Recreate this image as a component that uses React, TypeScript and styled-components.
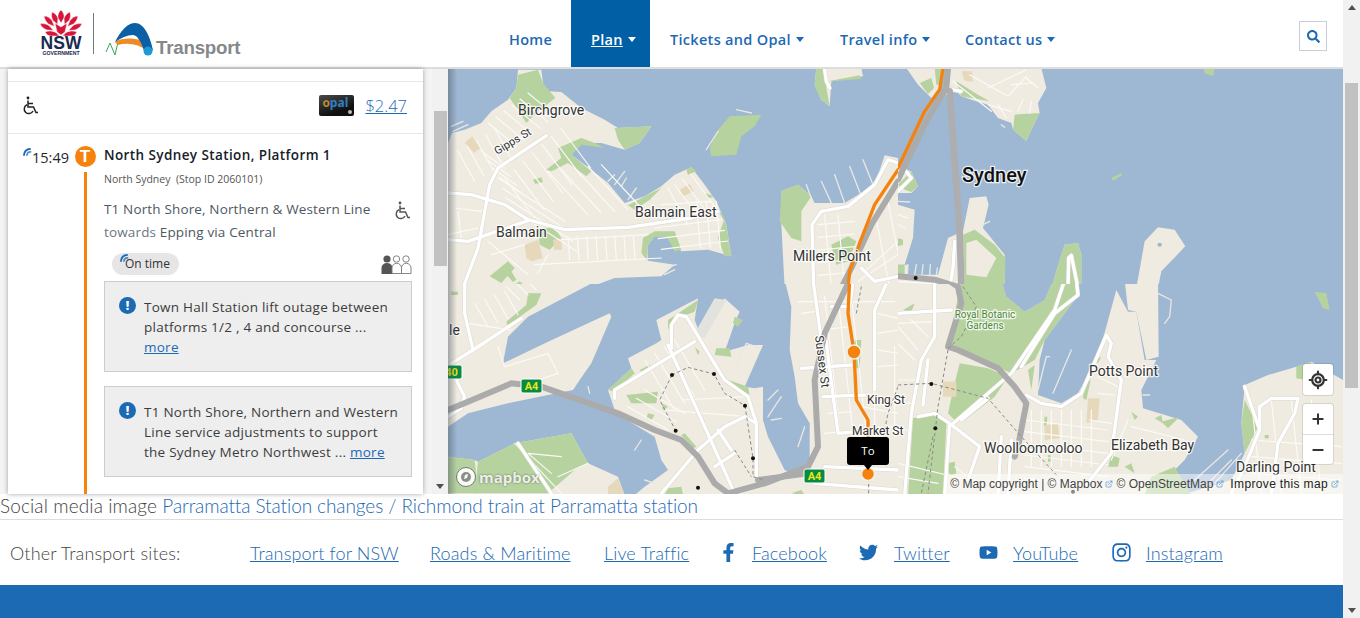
import React from 'react';
import styled, { createGlobalStyle } from 'styled-components';
import { FaFacebookF, FaInstagram, FaSearch, FaTwitter, FaYoutube } from 'react-icons/fa';
import { ExternalLink, LocateFixed, Minus, Plus } from 'lucide-react';

const BLUE = '#1c69b4';
const ORANGE = '#f5820d';
const UI_FONT = '"Open Sans", "Noto Sans", sans-serif';
const FOOT_FONT = 'Lato, "Open Sans", sans-serif';
const MAP_FONT = 'Roboto, "Liberation Sans", sans-serif';

const GlobalStyle = createGlobalStyle`
  html, body { margin: 0; padding: 0; overflow: hidden; background: #fff; }
  * { box-sizing: border-box; }
  a { color: ${BLUE}; }
`;

const Page = styled.div`
  width: 1360px;
  height: 618px;
  display: flex;
  overflow: hidden;
  font-family: ${UI_FONT};
`;

const Main = styled.div`
  width: 1343px;
  display: flex;
  flex-direction: column;
`;

const Track = styled.div<{ $w: number }>`
  width: ${(p) => p.$w}px;
  flex: none;
  background: #f1f1f1;
  display: flex;
  flex-direction: column;
  align-items: center;
  padding: 5px 0;
`;

const Thumb = styled.div<{ $top: number; $h: number }>`
  width: 13px;
  height: ${(p) => p.$h}px;
  margin-top: ${(p) => p.$top}px;
  background: #c1c1c1;
`;

const Arrow = styled.div<{ $up?: boolean }>`
  width: 0;
  height: 0;
  border-left: 4px solid transparent;
  border-right: 4px solid transparent;
  ${(p) => (p.$up ? 'border-bottom: 5px solid #505050;' : 'border-top: 5px solid #505050; margin-top: auto;')}
`;

/* header */
const Header = styled.header`
  height: 69px;
  flex: none;
  display: flex;
  border-bottom: 2px solid #ddd;
  background: #fff;
`;

const Brand = styled.div`
  width: 489px;
  flex: none;
  display: flex;
  padding: 10px 0 0 40px;
`;

const Nav = styled.nav`
  display: flex;
  flex: 1;
`;

const NavItem = styled.a<{ $active?: boolean; $w: number }>`
  width: ${(p) => p.$w}px;
  flex: none;
  display: flex;
  align-items: center;
  gap: 5px;
  padding: 11px 0 0 20px;
  font-size: 14.5px;
  font-weight: 600;
  letter-spacing: 0.3px;
  color: ${(p) => (p.$active ? '#fff' : BLUE)};
  background: ${(p) => (p.$active ? '#005fa5' : 'transparent')};
  span {
    text-decoration: ${(p) => (p.$active ? 'underline' : 'none')};
  }
  i {
    width: 0;
    height: 0;
    margin-top: 1px;
    border-left: 4.5px solid transparent;
    border-right: 4.5px solid transparent;
    border-top: 5px solid ${(p) => (p.$active ? '#fff' : BLUE)};
  }
`;

const SearchButton = styled.button`
  width: 28px;
  height: 30px;
  margin: 21px 16px 0 auto;
  padding: 0;
  display: flex;
  align-items: center;
  justify-content: center;
  background: #fff;
  border: 1px solid #c9ced6;
  color: ${BLUE};
  font-size: 13px;
`;

/* journey panel */
const MapRow = styled.div`
  height: 425px;
  flex: none;
  display: flex;
`;

const LeftPane = styled.div`
  width: 448px;
  flex: none;
  display: flex;
  justify-content: space-between;
  padding-left: 8px;
  background: #f4f4f4;
`;

const Panel = styled.div`
  width: 415px;
  background: #fff;
  box-shadow: 0 0 5px rgba(0, 0, 0, 0.35);
  overflow: hidden;
  position: relative;
`;

const TopGap = styled.div`
  height: 13px;
  border-bottom: 1px solid #e8e8e8;
`;

const FareRow = styled.div`
  height: 52px;
  display: flex;
  align-items: center;
  gap: 11px;
  padding: 0 16px 4px 14px;
  border-bottom: 1px solid #e8e8e8;
`;

const OpalCard = styled.div`
  width: 35px;
  height: 21px;
  margin-left: auto;
  padding-left: 3px;
  border-radius: 2px;
  background: linear-gradient(160deg, #4a4a4a, #111 70%);
  color: #2f80c5;
  font-size: 12px;
  font-weight: 700;
  line-height: 15px;
  position: relative;
  span {
    color: #b98a34;
  }
  &::after {
    content: '';
    position: absolute;
    right: 2px;
    bottom: 2px;
    width: 4px;
    height: 4px;
    border-radius: 50%;
    background: #bbb;
  }
`;

const Fare = styled.a`
  font-size: 16.5px;
  font-weight: 300;
  text-decoration: underline;
  color: ${BLUE};
`;

const Leg = styled.div`
  display: flex;
  height: 361px;
`;

const TimeCol = styled.div`
  width: 67px;
  flex: none;
  padding: 14px 6px 0 0;
  text-align: right;
  font-size: 14.5px;
  color: #22272b;
  position: relative;
`;

const BlipMark = styled.svg<{ $left: number; $top: number }>`
  position: absolute;
  left: ${(p) => p.$left}px;
  top: ${(p) => p.$top}px;
`;

const RailCol = styled.div`
  width: 20px;
  flex: none;
  display: flex;
  flex-direction: column;
  align-items: center;
  padding-top: 12px;
`;

const ModeBadge = styled.div`
  width: 21px;
  height: 21px;
  flex: none;
  border-radius: 50%;
  background: ${ORANGE};
  color: #fff;
  font-family: 'Liberation Sans', sans-serif;
  font-size: 17px;
  font-weight: 700;
  line-height: 21px;
  text-align: center;
`;

const Rail = styled.div`
  width: 3px;
  flex: 1;
  margin-top: 5px;
  background: ${ORANGE};
`;

const Details = styled.div`
  width: 308px;
  margin-left: 9px;
  padding-top: 12px;
`;

const StopTitle = styled.div`
  font-size: 13.5px;
  font-weight: 600;
  line-height: 19px;
  letter-spacing: 0.4px;
  color: #17202a;
`;

const StopMeta = styled.div`
  margin-top: 6px;
  font-size: 10.5px;
  line-height: 16px;
  color: #555;
`;

const LineRow = styled.div`
  display: flex;
  justify-content: space-between;
  margin-top: 11px;
`;

const LineText = styled.div`
  font-size: 13.5px;
  line-height: 23px;
  letter-spacing: 0.15px;
  color: #4d5862;
  span {
    color: #6b7680;
  }
`;

const IconNudge = styled.div`
  padding-top: 3px;
`;

const StatusRow = styled.div`
  display: flex;
  justify-content: space-between;
  align-items: center;
  height: 26px;
  margin-top: 7px;
  padding-left: 8px;
`;

const StatusPill = styled.div`
  position: relative;
  width: 67px;
  height: 22px;
  border-radius: 11px;
  background: #e6e6e6;
  padding-left: 13px;
  font-size: 12px;
  line-height: 22px;
  color: #333;
`;

const Alert = styled.div<{ $first?: boolean }>`
  display: flex;
  gap: 8px;
  height: 91px;
  margin-top: ${(p) => (p.$first ? 4 : 14)}px;
  padding: 15px 12px 0 14px;
  background: #eee;
  border: 1px solid #ccc;
`;

const AlertIcon = styled.div`
  width: 17px;
  height: 17px;
  flex: none;
  border-radius: 50%;
  background: ${BLUE};
  color: #fff;
  font-size: 12px;
  font-weight: 800;
  line-height: 17px;
  text-align: center;
`;

const AlertText = styled.div`
  font-size: 13.5px;
  line-height: 20px;
  letter-spacing: 0.25px;
  white-space: nowrap;
  color: #3c3c3c;
  a {
    text-decoration: underline;
  }
`;

/* map */
const MapPane = styled.div`
  position: relative;
  flex: 1;
  overflow: hidden;
  background: #9eb7d2;
  &::before {
    content: '';
    position: absolute;
    inset: 0 auto 0 0;
    width: 9px;
    background: linear-gradient(90deg, rgba(70, 80, 90, 0.45), rgba(70, 80, 90, 0));
    z-index: 1;
  }
`;

const MapSvg = styled.svg`
  display: block;
  width: 895px;
  height: 425px;
`;

const Label = styled.text<{ $size?: number; $color?: string; $weight?: number }>`
  font-family: ${MAP_FONT};
  font-size: ${(p) => p.$size ?? 14}px;
  font-weight: ${(p) => p.$weight ?? 400};
  fill: ${(p) => p.$color ?? '#333'};
  stroke: rgba(255, 255, 255, 0.8);
  stroke-width: 2.5px;
  paint-order: stroke;
`;

const Controls = styled.div`
  position: absolute;
  right: 10px;
  bottom: 30px;
  display: flex;
  flex-direction: column;
  gap: 9px;
  color: #333;
`;

const ControlGroup = styled.div`
  width: 30px;
  background: #fff;
  border-radius: 3px;
  box-shadow: 0 0 0 1px rgba(0, 0, 0, 0.1);
`;

const ControlButton = styled.div<{ $h: number; $divided?: boolean }>`
  height: ${(p) => p.$h}px;
  display: flex;
  align-items: center;
  justify-content: center;
  border-top: ${(p) => (p.$divided ? '1px solid #ddd' : 'none')};
`;

const Pin = styled.div`
  position: absolute;
  left: 399px;
  top: 368px;
  width: 42px;
  height: 28px;
  background: #000;
  border-radius: 3px;
  color: #fff;
  font-size: 11.5px;
  line-height: 28px;
  text-align: center;
  &::after {
    content: '';
    position: absolute;
    left: 17px;
    bottom: -5px;
    border-left: 4px solid transparent;
    border-right: 4px solid transparent;
    border-top: 5px solid #000;
  }
`;

const Attribution = styled.div`
  position: absolute;
  right: 0;
  bottom: 0;
  width: 398px;
  height: 20px;
  padding-right: 4px;
  display: flex;
  align-items: center;
  justify-content: flex-end;
  gap: 3px;
  background: rgba(255, 255, 255, 0.5);
  font-family: 'Liberation Sans', sans-serif;
  font-size: 12px;
  color: #444;
  white-space: nowrap;
  svg {
    color: #4a90d0;
  }
  b {
    font-weight: 400;
    letter-spacing: 0.35px;
    color: #222;
    margin-left: 3px;
  }
`;

const MapboxMark = styled.div`
  position: absolute;
  left: 7px;
  bottom: 6px;
  display: flex;
  align-items: center;
  gap: 2px;
  font-family: ${UI_FONT};
  font-size: 15px;
  font-weight: 700;
  color: rgba(255, 255, 255, 0.9);
  text-shadow: 0 0 2px rgba(0, 0, 0, 0.55);
`;

/* footer */
const SocialLine = styled.div`
  height: 26px;
  flex: none;
  border-bottom: 1px solid #ddd;
  font-family: ${FOOT_FONT};
  font-size: 19px;
  font-weight: 300;
  letter-spacing: 0.12px;
  line-height: 24px;
  color: #444;
  white-space: nowrap;
  span {
    letter-spacing: -0.08px;
    color: ${BLUE};
  }
`;

const SitesRow = styled.div`
  height: 65px;
  flex: none;
  display: flex;
  align-items: center;
  padding-left: 10px;
  font-family: ${FOOT_FONT};
  font-size: 18px;
  font-weight: 300;
  letter-spacing: 0.15px;
  white-space: nowrap;
  color: #444;
`;

const SitesLabel = styled.span`
  width: 240px;
  flex: none;
`;

const SiteLink = styled.a<{ $w: number }>`
  display: flex;
  align-items: center;
  width: ${(p) => p.$w}px;
  flex: none;
  text-decoration: underline;
  color: ${BLUE};
`;

const SocialIcon = styled.span<{ $w: number; $size?: number }>`
  width: ${(p) => p.$w}px;
  flex: none;
  display: flex;
  color: ${BLUE};
  font-size: ${(p) => p.$size ?? 19}px;
`;

const Band = styled.div`
  flex: 1;
  background: #1c69b4;
`;

/* map data, in coordinates of 3x crops of each quarter of the map */
const hatch = (x: number, y: number, dx: number, dy: number, sx: number, sy: number, n: number) =>
  Array.from({ length: n }, (_, i) => `M${x + i * sx},${y + i * sy}l${dx},${dy}`).join('');

type Quarter = {
  id: string;
  x: number;
  y: number;
  w: number;
  h: number;
  clipY: number;
  land: string[];
  water?: string[];
  park: string[];
  sand?: string[];
  pale?: string[];
  wharves?: string[];
  streets: string[];
  roads: string[];
  motorways?: string[];
  bridge?: string[];
  rails?: string[];
  route?: string[];
  dots?: [number, number][];
};

const quarters: Quarter[] = [
  {
    id: 'nw',
    x: 448,
    y: 68,
    w: 1350,
    h: 648,
    clipY: 0,
    land: [
      'M0,225L12,195 50,185 100,165 130,130 180,95 205,60 210,5 280,5 285,45 300,70 340,72 400,120 470,155 510,180 610,175 575,225 530,245 460,225 400,225 370,260 430,305 480,345 530,405 590,385 640,355 680,320 730,298 770,350 805,400 835,470 850,565 780,545 700,550 655,505 620,505 598,535 600,578 680,590 640,625 500,630 420,660 0,660Z',
      'M1105,0L1240,0 1245,25 1150,40 1145,115 1120,95 1100,50Z',
      'M1010,660L1000,470 1000,370 1050,350 1090,385 1100,405 1190,405 1280,350 1310,262 1350,270 1350,660Z',
    ],
    park: [
      'M185,90L205,60 210,20 270,5 285,45 322,90 270,130 235,165 210,125Z',
      'M500,180L610,175 575,225 530,245 510,215Z',
      'M295,305L340,270 330,240 400,210 440,225 470,240 400,230 370,260 430,310 415,325 360,285 310,310Z',
      'M255,335L280,328 285,342 262,348Z',
      'M540,412L620,370 640,360 605,395 560,425Z',
      'M715,305L730,297 745,310 720,320Z',
      'M770,375L800,385 780,392Z',
      'M800,410L835,470 850,565 830,565 810,510 830,450Z',
      'M580,555L585,510 620,490 680,490 700,545 680,550 655,505 620,505 598,535 598,578Z',
      'M125,625L180,580 200,600 160,645Z',
      'M175,620L190,610 205,635 195,642Z',
      'M200,650L215,640 240,660 205,660Z',
      'M270,480L320,480 340,510 305,545 275,530Z',
      'M845,145L940,140 920,175 880,205 865,260 790,265 785,240 810,185Z',
      'M1105,0L1130,0 1135,60 1145,115 1115,90 1100,50Z',
      'M1140,40L1235,22 1240,33 1150,40Z',
      'M1000,370L1050,350 1090,385 1060,430 1060,520 1030,510 995,460Z',
      'M1150,530L1200,505 1225,520 1200,580 1165,590Z',
    ],
    sand: [
      'M50,225L72,205 97,240 78,255Z',
      'M695,365L725,348 738,370 705,385Z',
      'M230,530L270,515 285,570 250,580 235,570Z',
      'M315,515L340,510 342,545 318,545Z',
    ],
    wharves: [
      'M10,175L45,160M15,190L60,170M775,245L810,190M865,125L910,135M480,340L500,320M500,350L530,310M520,355L535,330M540,395L565,360M650,600L685,590M650,620L680,605',
      'M1075,350L1095,405M1120,340L1150,405M1160,320L1190,405M1205,295L1240,385M1245,275L1275,350',
    ],
    streets: [
      hatch(120, 165, 85, 70, 24, -18, 6),
      hatch(30, 250, 50, 90, 28, -16, 5),
      hatch(100, 250, 70, 50, 18, 26, 4),
      hatch(170, 330, 90, 120, 28, -25, 7),
      hatch(150, 330, 200, 130, 12, 30, 4),
      hatch(300, 310, 120, 130, 40, -5, 5),
      hatch(360, 505, 5, 70, 28, 0, 8),
      'M340,515L600,500M260,590L640,570M270,615L300,560M120,520L240,620M130,560L230,530M20,420L100,430M0,500L90,480M30,430L40,510',
      hatch(680, 350, 70, 95, 24, -16, 3),
      hatch(620, 480, 200, -25, 10, 32, 3),
      hatch(745, 400, 12, 140, 30, 0, 3),
      'M640,410L790,400M660,360L720,470',
      hatch(1110, 470, 110, -10, 0, 38, 5),
      hatch(1130, 440, 20, 220, 40, 0, 2),
      hatch(1280, 430, 45, 230, 40, -30, 2),
      'M1230,640L1350,560M1250,610L1350,520',
    ],
    roads: [
      'M295,203L150,300 125,350 90,540 45,660',
      'M0,375L70,380 170,410 240,455 350,485 540,478 730,450 810,430',
      'M0,515L60,520 240,458',
      'M1097,660L1092,470 1120,430 1200,415 1280,350 1320,275 1350,285',
      'M1130,5L1135,40 1145,60',
      'M1240,600L1280,640 1350,625',
    ],
    motorways: ['M1350,340L1270,470 1210,600 1180,660'],
    route: ['M1350,305L1280,410 1235,525 1205,610 1200,660'],
  },
  {
    id: 'ne',
    x: 898,
    y: 68,
    w: 1350,
    h: 648,
    clipY: 0,
    land: [
      'M25,0L60,50 100,90 130,50 130,0Z',
      'M150,0L430,0 445,60 420,105 425,135 400,185 385,218 345,185 340,165 300,150 270,110 220,95 190,85 175,70 150,60Z',
      'M0,300L40,310 60,355 40,375 0,375Z',
      'M0,410L50,425 45,510 20,590 0,590Z',
      'M0,625L0,590 30,590 30,620 120,620 150,510 195,490 215,390 265,385 272,410 255,480 320,560 320,660 0,660Z',
      'M460,660L490,560 500,530 540,525 550,560 550,660Z',
      'M715,660L740,520 780,478 830,485 862,535 790,610 780,660Z',
    ],
    water: ['M778,530a7,6 0 1,0 14,0a7,6 0 1,0 -14,0Z'],
    park: [
      'M65,45L100,30 108,60 90,78Z',
      'M110,0L135,0 130,50 115,50Z',
      'M175,40L240,80 275,100 250,95 190,85Z',
      'M350,140L425,135 400,185 385,218 345,185Z',
      'M915,0L950,0 945,25 920,15Z',
      'M640,330L670,315 672,322 645,338Z',
      'M0,350L40,310 60,355 40,372 20,365Z',
      'M0,510L15,515 15,530 0,535Z',
      'M195,500L230,485 290,530 322,570 320,660 200,660Z',
      'M460,660L490,560 500,530 540,525 550,560 550,660Z',
      'M0,590L20,590 20,620 0,620Z',
    ],
    pale: ['M205,525L235,515 295,570 265,628 205,620Z'],
    sand: ['M190,10L222,10 225,42 200,38Z'],
    wharves: [
      'M30,590L28,620M55,590L50,620M75,590L72,620M97,590L95,620M118,600L115,620',
      'M255,470L275,460M310,170L320,178M0,400L35,402',
    ],
    streets: [
      'M215,20L330,85M165,40L280,130M270,60L385,5M330,85L385,25M360,130L375,95M300,110L325,150M270,110L340,130M340,50L405,45M385,30L420,60M400,100L395,135M0,640L150,650',
      'M0,440L30,450M0,470L20,480',
    ],
    roads: ['M170,520L165,600 155,660', 'M510,660L512,570 520,562 540,660', 'M20,305L40,330 0,370', 'M145,75L160,65 190,70'],
    motorways: ['M150,0L145,60 90,150 0,335', 'M0,625L110,635 190,660'],
    bridge: ['M155,70L185,490 190,650'],
    route: ['M135,0L125,65 80,130 0,300'],
    dots: [[53, 630]],
  },
  {
    id: 'sw',
    x: 448,
    y: 280,
    w: 1350,
    h: 645,
    clipY: 12,
    land: [
      'M0,0L450,0 240,110 180,170 165,250 300,185 485,100 490,110 430,250 395,300 375,330 300,345 180,370 60,400 0,440Z',
      'M0,530L80,540 90,545 200,490 370,460 420,550 510,590 530,645 0,645Z',
      'M480,330L550,265 540,235 625,190 640,180 625,120 750,55 740,120 755,160 830,55 875,95 860,130 830,215 900,195 945,195 890,320 920,325 945,320 945,420 960,470 1010,570 1050,590 1085,560 1085,430 1050,370 1040,290 1025,210 1030,80 1010,0 1350,0 1350,645 560,645 590,620 660,570 640,540 620,470 520,410 500,390Z',
    ],
    park: [
      'M660,120L750,60 740,95 700,110 680,105 660,150Z',
      'M480,330L550,265 560,280 500,335Z',
      'M575,270L605,255 612,265 580,275Z',
      'M535,345L630,335 625,370 550,370Z',
      'M600,400L620,405 610,420 595,415Z',
      'M640,370L660,380 645,390Z',
      'M740,200L755,215 750,225Z',
      'M805,205L845,205 850,230 800,225Z',
      'M860,110L885,120 870,140 855,130Z',
      'M840,300L900,320 905,345 860,320Z',
      'M710,460L745,500 735,505 700,465Z',
      'M240,40L280,40 265,75 215,110 180,140 175,125 235,75Z',
      'M10,35L30,35 30,45 10,45Z',
      'M80,540L90,640 0,640 0,530Z',
      'M90,545L200,490 370,460 420,550 380,570 300,640 80,640Z',
      'M1220,180L1240,180 1235,265 1215,265Z',
      'M660,625L700,620 705,645 650,645Z',
      'M1030,640L1060,630 1070,645Z',
    ],
    sand: ['M480,620L510,595 530,645 480,645Z'],
    pale: ['M740,160L800,55 835,60 770,175Z'],
    wharves: [
      'M420,320L425,340M560,510L580,480M590,600L620,610M860,270L895,190 940,205M960,360L990,330M960,410L1000,350M970,420L1000,415M1050,500L1070,440',
    ],
    streets: [
      hatch(80, 70, 40, 70, 30, -12, 4),
      hatch(175, 20, 40, 40, 25, -15, 3),
      'M150,200L170,260 300,220 330,280 210,320M60,130L190,150',
      hatch(590, 240, 90, 150, 30, -20, 4),
      hatch(540, 380, 120, 70, 25, -25, 3),
      'M650,390L900,410M700,360L900,350',
      hatch(1050, 65, 290, 0, 0, 28, 1),
      'M1060,100L1100,95M1120,150L1205,140M1060,265L1200,255M1135,350L1230,345M1140,400L1210,395',
      hatch(1130, 50, 45, 410, 40, 0, 3),
      hatch(1280, 200, 0, 270, 60, 0, 2),
      'M1290,100L1350,115M1290,160L1350,150M1290,210L1350,220M1290,260L1350,255M1240,380L1350,400M1130,460L1350,440',
      'M310,580L240,520 340,530M200,490L340,640M420,550L330,590',
    ],
    roads: [
      'M50,0L50,100 75,210 10,250',
      'M75,210L220,115',
      'M20,290L50,350 40,385 0,410',
      'M500,355L500,330 740,185',
      'M670,205L670,135 690,105 715,110 790,235 830,300 900,350 925,430 925,600',
      'M660,195L860,640',
      'M640,640L750,510 830,440 890,410 925,430',
      'M810,450L850,510',
      'M800,560L860,520',
      'M1215,5L1205,80 1150,80',
      'M1060,265L1210,255',
      'M1280,330L1280,90 1320,0',
      'M1095,0L1120,180',
      'M1125,350L1250,345',
      'M1130,150L1170,460 1220,455',
      'M1130,560L1350,570',
      'M1100,610L1350,630',
      'M210,490L310,640',
    ],
    motorways: [
      'M0,390L60,365 190,310 280,320 510,400 620,450 700,480 750,530 800,610 840,640 950,610 1080,560 1110,500 1100,300 1130,160 1205,0',
      'M930,600L1080,580',
    ],
    rails: [
      'M672,285L720,262 798,282 830,340 891,377',
      'M672,285L635,360 683,452',
      'M891,377L915,535 915,590 950,600',
      'M860,510L910,590',
      'M1350,320L1320,400 1310,450',
      'M1225,100L1240,20M1262,640L1262,600',
    ],
    route: ['M1205,0L1200,100 1218,217 1225,360 1260,420 1262,580'],
    dots: [
      [672, 285],
      [798, 282],
      [891, 377],
      [683, 452],
      [915, 535],
      [750, 623],
    ],
  },
  {
    id: 'se',
    x: 898,
    y: 280,
    w: 1335,
    h: 645,
    clipY: 12,
    land: [
      'M0,0L540,0 545,40 500,100 440,180 425,240 420,345 490,370 540,340 600,230 655,30 690,95 715,95 740,240 775,240 730,330 735,385 850,420 900,470 860,540 830,570 880,645 0,645Z',
      'M680,0L780,0 782,230 745,240 715,95 690,90Z',
      'M1040,315L1110,285 1195,260 1240,245 1335,300 1335,645 850,645 1000,600 1040,520 1030,430Z',
    ],
    water: ['M310,0L465,0 440,60 380,95 325,50Z'],
    park: [
      'M190,0L310,0 325,50 380,95 440,60 465,0 540,0 545,40 500,100 440,180 410,240 340,280 270,250 190,210 150,200 170,100Z',
      'M185,250L270,265 330,290 290,350 200,420 170,420 150,400 170,310Z',
      'M45,415L110,395 145,430 135,645 30,645Z',
      'M1195,260L1240,245 1225,300 1195,295Z',
      'M1040,360L1080,440 1040,520 1030,430Z',
      'M1250,35L1285,40 1295,90 1275,85Z',
      'M15,90L50,70 40,95Z',
      'M700,395L720,410 710,420Z',
      'M770,415L790,405 795,430Z',
      'M790,425L845,410 810,445Z',
      'M640,525L665,535 660,560 630,560Z',
      'M680,560L700,550 710,580Z',
      'M560,310L578,300 565,360 555,355Z',
      'M760,590L830,560 880,645 740,645Z',
      'M150,550L170,545 175,580 155,590Z',
      'M390,270L410,255 400,330Z',
      'M590,240L610,230 600,250Z',
      'M440,410L448,410 445,440 438,438Z',
      'M450,525L462,525 460,545 450,545Z',
      'M1100,465L1112,465 1112,475 1100,475Z',
    ],
    sand: [
      'M135,305L175,305 175,350 135,350Z',
      'M570,355L605,355 600,420 565,430Z',
      'M440,435L480,432 485,475 440,480Z',
    ],
    wharves: [
      'M420,330L445,230 455,230M465,340L520,210M780,40L820,60 815,110 800,130M890,600L990,510M920,620L1000,540M950,610L1030,520M735,345L755,345',
    ],
    streets: [
      hatch(0, 100, 100, -5, 0, 30, 2),
      'M0,140L60,210M0,190L50,240M40,120L90,170M0,300L60,300M0,370L50,370M0,450L40,450',
      hatch(400, 390, 0, 170, 30, 0, 7),
      hatch(380, 420, 250, 30, 0, 35, 6),
      'M600,290L660,320M600,340L650,345M575,420L640,430M700,440L860,480M660,510L860,510M690,420L640,540',
      hatch(1060, 360, 30, 280, 60, 0, 4),
      hatch(1060, 480, 270, 20, 0, 50, 3),
      'M0,550L210,600M0,590L120,610',
      'M170,560L270,640',
    ],
    roads: [
      'M500,0L470,90 340,280 160,435',
      'M535,0L540,45 470,100 370,260',
      'M110,0L110,170 70,240 40,400 20,645',
      'M60,410L110,400 155,430 245,500 210,600',
      'M155,430L140,645',
      'M90,240L75,375',
      'M385,345L430,370 490,380 550,340 625,165 640,190 630,230 670,300 640,520 560,620',
      'M1040,320L1085,450 1040,560 1000,640',
      'M1085,445L1085,380 1120,355 1200,355 1190,400 1140,490 1120,645',
      'M0,100L160,90',
      'M310,470L300,640M340,480L330,640',
      'M270,355L190,420',
    ],
    motorways: ['M0,0L150,0 180,20 190,70 150,200 180,210 300,265 350,320 385,370 360,500 350,530'],
    rails: ['M0,315L100,310 270,355 370,470 480,590', 'M150,210L120,380 90,640', 'M195,20L235,80 190,170 150,205', 'M105,470L70,640'],
    dots: [
      [100, 312],
      [112, 445],
      [525, 635],
    ],
  },
];

const MapLayer = ({ q }: { q: Quarter }) => (
  <g transform={`translate(${q.x} ${q.y}) scale(${1 / 3})`} clipPath={`url(#clip-${q.id})`} fill="none" strokeLinecap="round" strokeLinejoin="round">
    <clipPath id={`clip-${q.id}`}>
      <rect x={0} y={q.clipY} width={q.w} height={q.h - q.clipY} />
    </clipPath>
    {q.land.map((d) => <path key={d} d={d} fill="#efebe0" />)}
    {q.park.map((d) => <path key={d} d={d} fill="#b6d29f" />)}
    {q.pale?.map((d) => <path key={d} d={d} fill={q.id === 'sw' ? '#e2e2de' : '#efebe0'} />)}
    {q.water?.map((d) => <path key={d} d={d} fill="#9eb7d2" />)}
    {q.sand?.map((d) => <path key={d} d={d} fill="#e6d9bb" />)}
    {q.wharves?.map((d) => <path key={d} d={d} stroke="#e8e8e2" strokeWidth={4} />)}
    {q.streets.map((d) => <path key={d} d={d} stroke="#fbfaf6" strokeWidth={3.5} />)}
    {q.roads.map((d) => <path key={d} d={d} stroke="#d9d8d2" strokeWidth={13} />)}
    {q.roads.map((d) => <path key={d} d={d} stroke="#fff" strokeWidth={10} />)}
    {q.bridge?.map((d) => <path key={d} d={d} stroke="#aeaeb0" strokeWidth={20} />)}
    {q.motorways?.map((d) => <path key={d} d={d} stroke="#ababab" strokeWidth={18} />)}
    {q.rails?.map((d) => <path key={d} d={d} stroke="#8a8a8a" strokeWidth={3} strokeDasharray="10 8" strokeLinecap="butt" />)}
    {q.route?.map((d) => <path key={d} d={d} stroke={ORANGE} strokeWidth={10} />)}
    {q.dots?.map(([x, y]) => <circle key={x} cx={x} cy={y} r={6} fill="#111" />)}
  </g>
);

const RoadShield = ({ x, y, text }: { x: number; y: number; text: string }) => (
  <g>
    <rect x={x} y={y} width={21} height={14} rx={2} fill="#078a43" stroke="#fff" />
    <text x={x + 10.5} y={y + 11} textAnchor="middle" fontFamily={MAP_FONT} fontSize={11} fontWeight={700} fill="#e6e61e">
      {text}
    </text>
  </g>
);

const SydneyMap = () => (
  <MapSvg viewBox="448 69 895 425">
    {quarters.map((q) => <MapLayer key={q.id} q={q} />)}
    <RoadShield x={521} y={379} text="A4" />
    <RoadShield x={804} y={469} text="A4" />
    <RoadShield x={441} y={365} text="40" />
    <circle cx={854} cy={352} r={7} fill={ORANGE} stroke="#f3f1e8" strokeWidth={1.5} />
    <circle cx={868} cy={474} r={6.5} fill={ORANGE} stroke="#f3f1e8" strokeWidth={1.5} />
    <Label x={518} y={115}>Birchgrove</Label>
    <Label x={497} y={155} $size={11} transform="rotate(-31 497 155)">Gipps St</Label>
    <Label x={635} y={217}>Balmain East</Label>
    <Label x={496} y={237}>Balmain</Label>
    <Label x={793} y={261}>Millers Point</Label>
    <Label x={962} y={182} $size={20} $weight={500} $color="#111">Sydney</Label>
    <Label x={985} y={318} $size={10} $color="#4d8a34" textAnchor="middle">Royal Botanic</Label>
    <Label x={985} y={329} $size={10} $color="#4d8a34" textAnchor="middle">Gardens</Label>
    <Label x={1089} y={376}>Potts Point</Label>
    <Label x={984} y={453}>Woolloomooloo</Label>
    <Label x={1111} y={450}>Elizabeth Bay</Label>
    <Label x={1236} y={472}>Darling Point</Label>
    <Label x={449} y={335}>le</Label>
    <Label x={867} y={404} $size={12}>King St</Label>
    <Label x={852} y={435} $size={12}>Market St</Label>
    <Label x={815} y={336} $size={12} transform="rotate(83 815 336)">Sussex St</Label>
  </MapSvg>
);

/* small drawn icons */
const Wheelchair = ({ color = '#222' }: { color?: string }) => (
  <svg width="18" height="19" viewBox="0 0 18 19" fill="none" stroke={color} strokeWidth="1.5">
    <circle cx="6" cy="2" r="1.4" fill={color} stroke="none" />
    <path d="M6 4.5V11H11.5L14 16.5H16" />
    <path d="M6 7.5H11" />
    <path d="M5 8.8A4.6 4.6 0 1 0 11 15" />
  </svg>
);

const RealtimeBlip = ({ left, top }: { left: number; top: number }) => (
  <BlipMark $left={left} $top={top} width="9" height="8" viewBox="0 0 9 8" fill="none" stroke={BLUE} strokeWidth="1.8" strokeLinecap="round">
    <path d="M1 7A6 6 0 0 1 7 1" />
    <path d="M4 7A3.500 3.500 0 0 1 7.500 3.800" opacity=".75" />
  </BlipMark>
);

const CrowdIcon = () => (
  <svg width="31" height="20" viewBox="0 0 31 20">
    <circle cx="6" cy="5" r="3.6" fill="#555" />
    <path d="M0.5 20V14a5.5 5 0 0 1 11 0V20Z" fill="#555" />
    <g fill="#fff" stroke="#777" strokeWidth="0.9">
      <circle cx="15.5" cy="5" r="3.2" />
      <circle cx="25" cy="5" r="3.2" />
      <path d="M11 19.5V14a4.7 4.7 0 0 1 9.5 0V19.5Z" />
      <path d="M20.5 19.5V14a4.7 4.7 0 0 1 9.5 0V19.5Z" />
    </g>
  </svg>
);

const TransportLogo = () => (
  <svg width="203" height="50" viewBox="0 0 203 50">
    <g fill="#d7153a" stroke="#fff" strokeWidth="0.5">
      <path d="M15 13l6 4 6-4-2 9-4 3-4-3Z" />
      <path d="M21 0c2.500 2 3.500 5 3 8l-3 5-3-5c-.5-3 .5-6 3-8Z" />
      <path d="M12 2c3 1 5 3.500 6 6.500l-.5 6-4.500-4C11.500 8 11 5 12 2Z" />
      <path d="M30 2c-3 1-5 3.500-6 6.500l.5 6 4.500-4C30.500 8 31 5 30 2Z" />
      <path d="M4 6c3.500 0 6 2 8 4.500l2.500 6-6-2.500C6 12 4.500 9 4 6Z" />
      <path d="M38 6c-3.500 0-6 2-8 4.500l-2.500 6 6-2.500C36 12 37.500 9 38 6Z" />
      <path d="M0 14c3.500-1 7 0 9.500 2l4 4.500-6.500-.5C4 19 1.500 17 0 14Z" />
      <path d="M42 14c-3.500-1-7 0-9.500 2l-4 4.500 6.500-.5C38 19 40.500 17 42 14Z" />
      <path d="M5 22c3-1.500 7-1.500 11 .5l3.500 3.500H11C8.500 26 6.500 24.500 5 22Z" />
      <path d="M37 22c-3-1.500-7-1.500-11 .5L22.500 26H31c2.500 0 4.500-1.500 6-4Z" />
    </g>
    <text x="21" y="39" textAnchor="middle" fontFamily="'Liberation Sans', sans-serif" fontSize="17.500" fontWeight="700" fill="#1a2a50">NSW</text>
    <text x="21" y="44.500" textAnchor="middle" fontFamily="'Liberation Sans', sans-serif" fontSize="5.200" fontWeight="700" fill="#1a2a50">GOVERNMENT</text>
    <rect x="53" y="3" width="1" height="41" fill="#6e7a80" />
    <path d="M66 42l4-9 5 12 3-13" fill="none" stroke="#3aa655" strokeWidth="1" />
    <path d="M75 32C84 27 95 28 108 32L109 41C98 34 88 32 78 35Z" fill="#f08a24" />
    <path d="M75 32C81 20 88 13 95 13 104 13 110 26 113 40L105 44C102 34 98 25 93 25 87 25 81 28 75 32Z" fill="#0b5fa5" />
    <circle cx="108" cy="41" r="4.500" fill="#1d9ad6" />
    <text x="116" y="44" fontFamily="'Liberation Sans', sans-serif" fontSize="18.700" fontWeight="700" letterSpacing="-0.2" fill="#85888a">Transport</text>
  </svg>
);

const navItems = [
  { label: 'Home', w: 82 },
  { label: 'Plan', caret: true, active: true, w: 79 },
  { label: 'Tickets and Opal', caret: true, w: 170 },
  { label: 'Travel info', caret: true, w: 125 },
  { label: 'Contact us', caret: true, w: 120 },
];

const alerts = [
  { id: 'lift', lines: ['Town Hall Station lift outage between', 'platforms 1/2 , 4 and concourse ...', ''] },
  { id: 'metro', lines: ['T1 North Shore, Northern and Western', 'Line service adjustments to support', 'the Sydney Metro Northwest ... '] },
];

const sites = [
  { label: 'Transport for NSW', w: 180 },
  { label: 'Roads & Maritime', w: 174 },
  { label: 'Live Traffic', w: 115 },
];

const socials = [
  { label: 'Facebook', icon: <FaFacebookF />, iconW: 33, w: 107, size: 19 },
  { label: 'Twitter', icon: <FaTwitter />, iconW: 35, w: 85, size: 19 },
  { label: 'YouTube', icon: <FaYoutube />, iconW: 34, w: 98, size: 19 },
  { label: 'Instagram', icon: <FaInstagram />, iconW: 35, w: 90, size: 21 },
];

export default function App() {
  return (
    <Page>
      <GlobalStyle />
      <Main>
        <Header>
          <Brand>
            <TransportLogo />
          </Brand>
          <Nav>
            {navItems.map((item) => (
              <NavItem key={item.label} $active={item.active} $w={item.w}>
                <span>{item.label}</span>
                {item.caret && <i />}
              </NavItem>
            ))}
            <SearchButton aria-label="Search">
              <FaSearch />
            </SearchButton>
          </Nav>
        </Header>

        <MapRow>
          <LeftPane>
            <Panel>
              <TopGap />
              <FareRow>
                <Wheelchair />
                <OpalCard><span>o</span>pal</OpalCard>
                <Fare>$2.47</Fare>
              </FareRow>
              <Leg>
                <TimeCol>
                  <RealtimeBlip left={15} top={14} />
                  15:49
                </TimeCol>
                <RailCol>
                  <ModeBadge>T</ModeBadge>
                  <Rail />
                </RailCol>
                <Details>
                  <StopTitle>North Sydney Station, Platform 1</StopTitle>
                  <StopMeta>North Sydney&nbsp; (Stop ID 2060101)</StopMeta>
                  <LineRow>
                    <LineText>
                      T1 North Shore, Northern &amp; Western Line
                      <br />
                      <span>towards</span> Epping via Central
                    </LineText>
                    <IconNudge>
                      <Wheelchair color="#555" />
                    </IconNudge>
                  </LineRow>
                  <StatusRow>
                    <StatusPill>
                      <RealtimeBlip left={8} top={1} />
                      On time
                    </StatusPill>
                    <CrowdIcon />
                  </StatusRow>
                  {alerts.map((alert, i) => (
                    <Alert key={alert.id} $first={i === 0}>
                      <AlertIcon>!</AlertIcon>
                      <AlertText>
                        {alert.lines.map((line, n) => (
                          <React.Fragment key={n}>
                            {line}
                            {n < 2 ? <br /> : <a>more</a>}
                          </React.Fragment>
                        ))}
                      </AlertText>
                    </Alert>
                  ))}
                </Details>
              </Leg>
            </Panel>
            <Track $w={16}>
              <Thumb $top={37} $h={155} />
              <Arrow />
            </Track>
          </LeftPane>
          <MapPane>
            <SydneyMap />
            <Pin>To</Pin>
            <Controls>
              <ControlGroup>
                <ControlButton $h={31}>
                  <LocateFixed size={20} strokeWidth={2.6} />
                </ControlButton>
              </ControlGroup>
              <ControlGroup>
                <ControlButton $h={30}>
                  <Plus size={16} strokeWidth={3} />
                </ControlButton>
                <ControlButton $h={30} $divided>
                  <Minus size={16} strokeWidth={3} />
                </ControlButton>
              </ControlGroup>
            </Controls>
            <MapboxMark>
              <svg width="22" height="22" viewBox="0 0 22 22">
                <circle cx="11" cy="11" r="9.500" fill="#fff" fillOpacity=".9" stroke="#777" strokeWidth="1" />
                <circle cx="11" cy="11" r="5" fill="#8a8f88" />
                <path d="M9 13l1-4 3-1-1 4Z" fill="#fff" />
              </svg>
              mapbox
            </MapboxMark>
            <Attribution>
              © Map copyright | © Mapbox <ExternalLink size={8} /> © OpenStreetMap <ExternalLink size={8} />
              <b>Improve this map</b> <ExternalLink size={8} />
            </Attribution>
          </MapPane>
        </MapRow>

        <SocialLine>
          Social media image <span>Parramatta Station changes / Richmond train at Parramatta station</span>
        </SocialLine>
        <SitesRow>
          <SitesLabel>Other Transport sites:</SitesLabel>
          {sites.map((site) => (
            <SiteLink key={site.label} $w={site.w}>{site.label}</SiteLink>
          ))}
          {socials.map((s) => (
            <React.Fragment key={s.label}>
              <SocialIcon $w={s.iconW} $size={s.size}>{s.icon}</SocialIcon>
              <SiteLink $w={s.w}>{s.label}</SiteLink>
            </React.Fragment>
          ))}
        </SitesRow>
        <Band />
      </Main>
      <Track $w={17}>
        <Arrow $up />
        <Thumb $top={73} $h={305} />
        <Arrow />
      </Track>
    </Page>
  );
}
